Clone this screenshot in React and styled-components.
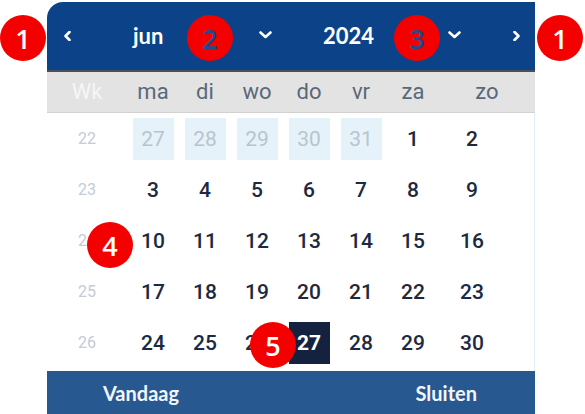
import React from "react";
import styled, { createGlobalStyle } from "styled-components";

const GlobalStyle = createGlobalStyle`
  html, body {
    margin: 0;
    padding: 0;
    background: #ffffff;
  }
  body {
    font-family: Roboto, "Liberation Sans", sans-serif;
  }
`;

const Page = styled.div`
  position: relative;
  width: 585px;
  height: 414px;
  overflow: hidden;
  padding-left: 47px;
  box-sizing: border-box;
`;

const Picker = styled.div`
  width: 488px;
  padding-top: 2px;
  display: flex;
  flex-direction: column;
`;

const Header = styled.div`
  display: flex;
  align-items: center;
  height: 68px;
  background: #0c4388;
  border-top-left-radius: 16px;
  border-bottom: 2px solid #4a4f57;
  color: #ffffff;
  font-family: Lato, "Liberation Sans", sans-serif;
  font-weight: 700;
  font-size: 22px;
`;

const NavButton = styled.div`
  display: flex;
  align-items: center;
  justify-content: ${({ $end }) => ($end ? "flex-end" : "center")};
  width: ${({ $width }) => $width}px;
  padding-right: ${({ $end }) => ($end ? "15px" : "0")};
  box-sizing: border-box;
  height: 100%;
`;

const Select = styled.div`
  display: flex;
  align-items: center;
  justify-content: space-between;
  width: ${({ $width }) => $width}px;
  padding-left: ${({ $left }) => $left}px;
  padding-right: ${({ $right }) => $right}px;
  box-sizing: border-box;
  height: 100%;
  padding-bottom: 2px;
`;

const WeekdayRow = styled.div`
  display: grid;
  grid-template-columns: 80px repeat(6, 52px) 96px;
  align-items: center;
  height: 40px;
  background: #e3e3e3;
  border-bottom: 1px solid #d2d2d2;
  font-size: 22px;
  color: #58697b;
`;

const Weekday = styled.div`
  text-align: center;
  color: ${({ $muted }) => ($muted ? "#f6f6f6" : "inherit")};
  padding-bottom: 2px;
`;

const Body = styled.div`
  display: grid;
  grid-template-columns: 80px repeat(6, 52px) 66px;
  grid-auto-rows: 51px;
  padding-right: 30px;
  padding-bottom: 3px;
  border-right: 1px solid #e4eef8;
`;

const WeekNumber = styled.div`
  display: flex;
  align-items: center;
  justify-content: center;
  font-size: 16px;
  color: #c2ccd6;
`;

const DayCell = styled.div`
  display: flex;
  align-items: center;
  justify-content: center;
`;

const Day = styled.div`
  display: flex;
  align-items: center;
  justify-content: center;
  width: ${({ $outside, $selected }) => ($outside || $selected ? "41px" : "auto")};
  height: 42px;
  font-size: 21px;
  font-weight: ${({ $outside }) => ($outside ? 400 : 500)};
  color: ${({ $outside, $selected }) =>
    $selected ? "#ffffff" : $outside ? "#b9c4cc" : "#1c2940"};
  background: ${({ $outside, $selected }) =>
    $selected ? "#15223f" : $outside ? "#e6f2fa" : "transparent"};
  font-weight: ${({ $selected, $outside }) => ($selected ? 700 : $outside ? 400 : 500)};
`;

const Footer = styled.div`
  display: flex;
  align-items: center;
  justify-content: space-between;
  height: 44px;
  padding: 0 58px 2px 56px;
  background: #27588f;
  color: #f2f6fb;
  font-family: Lato, "Liberation Sans", sans-serif;
  font-weight: 700;
  font-size: 20px;
`;

const Badge = styled.div`
  position: absolute;
  left: ${({ $x }) => $x - 23}px;
  top: ${({ $y }) => $y - 23}px;
  width: 46px;
  height: 46px;
  border-radius: 50%;
  background: #f40000;
  color: ${({ $dark }) => ($dark ? "#1e4c8c" : "#ffffff")};
  display: flex;
  align-items: center;
  justify-content: center;
  font-family: "Open Sans", "Liberation Sans", sans-serif;
  font-weight: 600;
  font-size: 27px;
  line-height: 1;
`;

const Chevron = ({ dir }) => {
  const paths = {
    left: "M5.5 1 L1.5 5 L5.5 9",
    right: "M1.5 1 L5.5 5 L1.5 9",
    down: "M1.5 1.5 L6.5 6 L11.5 1.5",
  };
  const size = dir === "down" ? [13, 8] : [7, 10];
  return (
    <svg width={size[0]} height={size[1]} viewBox={`0 0 ${size[0]} ${size[1]}`}>
      <path
        d={paths[dir]}
        fill="none"
        stroke="#ffffff"
        strokeWidth="2.6"
        strokeLinecap="round"
        strokeLinejoin="round"
      />
    </svg>
  );
};

const weekdays = ["ma", "di", "wo", "do", "vr", "za", "zo"];

const weeks = [
  { nr: 22, days: [27, 28, 29, 30, 31, 1, 2], outside: 5 },
  { nr: 23, days: [3, 4, 5, 6, 7, 8, 9] },
  { nr: 24, days: [10, 11, 12, 13, 14, 15, 16] },
  { nr: 25, days: [17, 18, 19, 20, 21, 22, 23] },
  { nr: 26, days: [24, 25, 26, 27, 28, 29, 30] },
];

const selectedDay = 27;

const badges = [
  { n: 1, x: 23, y: 38 },
  { n: 2, x: 210, y: 38, dark: true },
  { n: 3, x: 417, y: 38, dark: true },
  { n: 1, x: 560, y: 38 },
  { n: 4, x: 110, y: 245 },
  { n: 5, x: 273, y: 345 },
];

const App = () => {
  return (
    <Page>
      <GlobalStyle />
      <Picker>
        <Header>
          <NavButton $width={40}>
            <Chevron dir="left" />
          </NavButton>
          <Select $width={200} $left={46} $right={15}>
            <span>jun</span>
            <Chevron dir="down" />
          </Select>
          <Select $width={188} $left={36} $right={14}>
            <span>2024</span>
            <Chevron dir="down" />
          </Select>
          <NavButton $width={60} $end>
            <Chevron dir="right" />
          </NavButton>
        </Header>
        <WeekdayRow>
          <Weekday $muted>Wk</Weekday>
          {weekdays.map((d) => (
            <Weekday key={d}>{d}</Weekday>
          ))}
        </WeekdayRow>
        <Body>
          {weeks.map((week) => (
            <React.Fragment key={week.nr}>
              <WeekNumber>{week.nr}</WeekNumber>
              {week.days.map((day, i) => {
                const outside = week.outside ? i < week.outside : false;
                const selected = !outside && day === selectedDay && week.nr === 26;
                return (
                  <DayCell key={i}>
                    <Day $outside={outside} $selected={selected}>
                      {day}
                    </Day>
                  </DayCell>
                );
              })}
            </React.Fragment>
          ))}
        </Body>
        <Footer>
          <span>Vandaag</span>
          <span>Sluiten</span>
        </Footer>
      </Picker>
      {badges.map((b, i) => (
        <Badge key={i} $x={b.x} $y={b.y} $dark={b.dark}>
          {b.n}
        </Badge>
      ))}
    </Page>
  );
};

export default App;
